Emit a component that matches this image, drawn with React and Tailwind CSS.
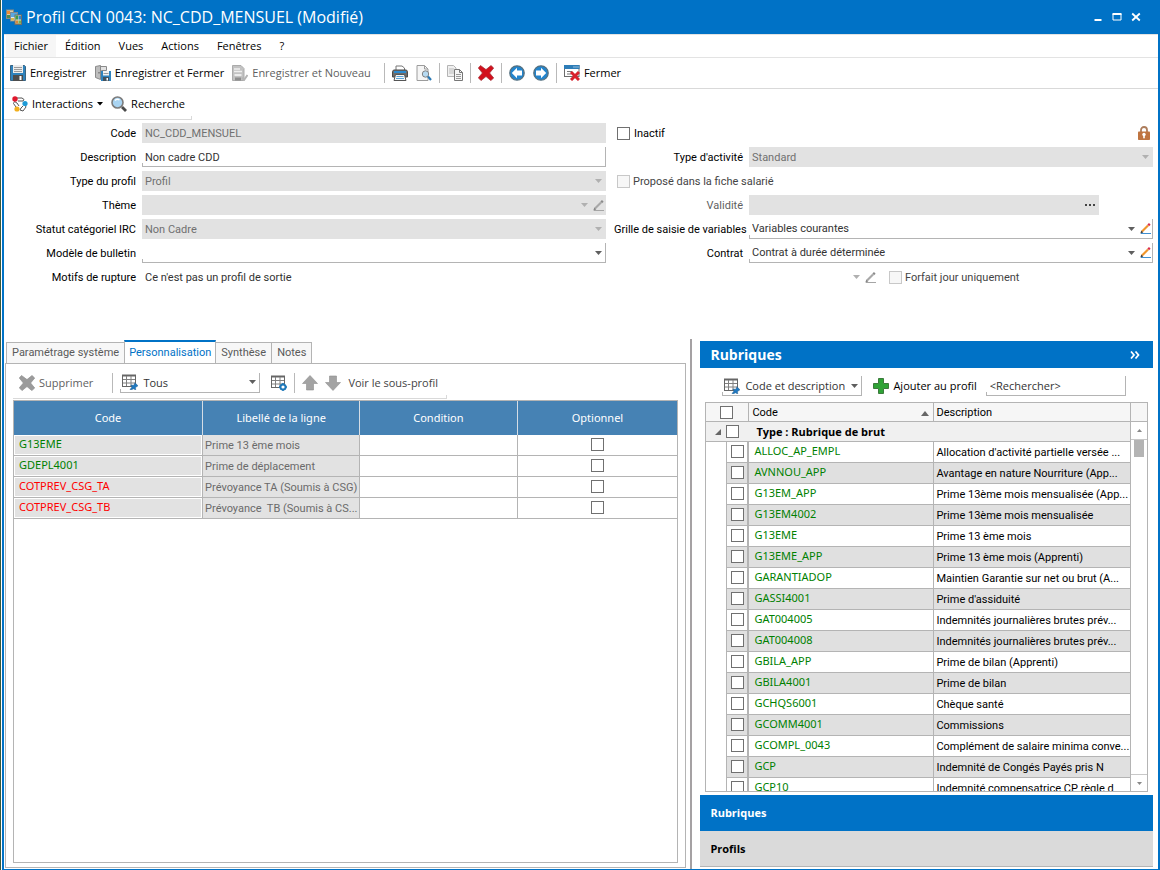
import React, { useState } from "react";

const TAHOMA = "font-['Roboto','Noto_Sans',sans-serif]";
const SEGOE = "font-['Open_Sans','Noto_Sans',sans-serif]";

/* ---------- icons ---------- */

function Svg({ children, className = "size-4" }) {
  return (
    <svg viewBox="0 0 16 16" className={`${className} shrink-0`} fill="none" aria-hidden="true">
      {children}
    </svg>
  );
}

function AppIcon() {
  return (
    <Svg>
      <path d="M0 0.500h8v9.500h-8z" fill="#8a8a80" />
      <path d="M1 1.500h6v7.500h-6z" fill="#d8cdb0" />
      <path d="M1 2h3v3h-3z" fill="#ee8c34" />
      <path d="M1 6h3v3h-3z" fill="#4f8a4f" />
      <path d="M4 3h8v9.500h-8z" fill="#7c8a94" />
      <path d="M5 4h6v7.500h-6z" fill="#dfe9f0" />
      <path d="M5 4h6v4h-6z" fill="#5aa7de" />
      <path d="M5 9h3v2.500h-3z" fill="#d9b84c" />
      <path d="M8.500 5.500h7.500v10.500h-7.500z" fill="#6f6f68" />
      <path d="M9.500 6.500h5.500v8h-5.500z" fill="#d8dcc8" />
      <path d="M9.500 6.500h2.500v4h-2.500z" fill="#3f9a48" />
      <path d="M12.500 7h2.500v3.500h-2.500z" fill="#2f86cc" />
      <path d="M9.500 11.500h2.500v3h-2.500z" fill="#d8893a" />
      <path d="M12.500 11.500h2.500v3h-2.500z" fill="#7fae4a" />
    </Svg>
  );
}

function SaveIcon() {
  return (
    <Svg>
      <path d="M0.500 0.500h14L15.500 1.500V15.500H0.500z" fill="#2f83bd" stroke="#3a6482" />
      <rect x="3" y="0" width="10" height="8" fill="#ececec" />
      <path d="M4 2.500h8M4 4.500h8M4 6.500h8" stroke="#9a9a9a" />
      <rect x="3" y="10" width="10" height="6" fill="#4d4d4d" />
      <rect x="9.500" y="11" width="2" height="4" fill="#fff" />
    </Svg>
  );
}

function SaveCloseIcon() {
  return (
    <Svg>
      <path d="M3.500 1.500h8v4h-5v7h-3z" fill="#e2e2e2" stroke="#8a8a8a" />
      <path d="M0.500 1.500L5.500 0.500v14L0.500 12.500z" fill="#bdbdbd" stroke="#8a8a8a" />
      <path d="M4 7v1.500" stroke="#555" />
      <rect x="6" y="6" width="10" height="10" fill="#2f83bd" />
      <rect x="8" y="6" width="6" height="4.500" fill="#f2f2f2" />
      <path d="M8.500 8.500h5" stroke="#999" />
      <rect x="8" y="12" width="6" height="4" fill="#43525e" />
      <rect x="11.500" y="13" width="1.500" height="2.500" fill="#fff" />
    </Svg>
  );
}

function SaveNewIcon() {
  return (
    <Svg>
      <path d="M0.500 0.500h8.500l3 3v12h-11.500z" fill="#c2c2c2" stroke="#ababab" />
      <path d="M2 4h6M2 6.500h8" stroke="#efefef" strokeWidth="1.500" />
      <rect x="2.500" y="9" width="7" height="2" fill="#ececec" />
      <rect x="3" y="12.500" width="6" height="3" fill="#8e8e8e" />
      <path d="M10 12.500l2 2.500 3.500-5" stroke="#b4b4b4" strokeWidth="2" />
    </Svg>
  );
}

function PrintIcon() {
  return (
    <Svg>
      <path d="M4 5V1h6l2.500 2V5" fill="#fff" stroke="#777" />
      <path d="M1.500 5h13l1 1.500V12h-15V6.500z" fill="#6b6b6b" stroke="#4a4a4a" />
      <path d="M2 7h12" stroke="#2a8ad0" strokeWidth="2" />
      <path d="M3.500 9.500h9l1.500 6h-12z" fill="#f6f6f6" stroke="#555" />
      <path d="M4.500 11.500h7M4 13.500h8" stroke="#5aa3d6" />
    </Svg>
  );
}

function PreviewIcon() {
  return (
    <Svg>
      <path d="M1 0.500h7.500l3.500 3.500v11.500h-11z" fill="#f5f5f5" stroke="#9c9c9c" />
      <path d="M8.500 0.500v3.500h3.500" stroke="#9c9c9c" />
      <circle cx="9.500" cy="9" r="3.200" fill="#b6daf2" stroke="#808080" />
      <path d="M12 11.500l3 3.500" stroke="#2878b4" strokeWidth="2.200" />
    </Svg>
  );
}

function CopyIcon() {
  return (
    <Svg>
      <path d="M0.500 0.500h6l2.500 2.500v8.500h-8.500z" fill="#f0f0f0" stroke="#b4b4b4" />
      <path d="M2 4h5M2 6h5M2 8h5" stroke="#bdbdbd" />
      <path d="M7.500 4.500h5l3 3v8h-8z" fill="#f6f6f6" stroke="#777" />
      <path d="M12.500 4.500v3h3" stroke="#777" />
      <path d="M9 9.500h5M9 11.500h5M9 13.500h5" stroke="#999" />
    </Svg>
  );
}

function CrossIcon({ fill = "#d2101c", stroke = "#a03038" }) {
  return (
    <Svg>
      <path
        d="M2.500 0.500L8 4.600 13 0.500 15.700 3 11.600 8 15.700 13 12.800 15.600 8 11.500 3 15.600 0.300 12.800 4.400 8 0.300 3z"
        fill={fill}
        stroke={stroke}
        strokeWidth="0.700"
      />
    </Svg>
  );
}

function CircleArrowIcon({ flip }) {
  return (
    <svg viewBox="0 0 16 16" className={flip ? "size-4 shrink-0 -scale-x-100" : "size-4 shrink-0"} fill="none" aria-hidden="true">
      <circle cx="8" cy="8" r="7.200" fill="#2384cc" stroke="#55707f" strokeWidth="1.300" />
      <path d="M2.800 8L8 2.800v2.700h5v5H8v2.700z" fill="#fff" />
    </svg>
  );
}

function CloseWindowIcon() {
  return (
    <Svg>
      <rect x="0.500" y="0.500" width="14.500" height="11" fill="#fff" stroke="#6c6c6c" />
      <rect x="0" y="0" width="15.500" height="4" fill="#2d7db8" />
      <path d="M9.500 2h1M11.500 2h1M13.500 2h1" stroke="#fff" />
      <path d="M3 6.500h5M3 9h4" stroke="#777" />
      <path d="M7 7l8 8M15 7l-8 8" stroke="#d8202c" strokeWidth="3" />
    </Svg>
  );
}

function InteractionsIcon() {
  return (
    <Svg>
      <path d="M5 2h5l2 1.500-1 1.500h-5M13 9l1 2-3 4-3-1 1-2 2-2M4 11L1.500 7.500l1-2 2.500 1.500 2 3" stroke="#555" fill="#fff" />
      <circle cx="3" cy="3" r="2.700" fill="#e0182d" />
      <circle cx="13" cy="7.500" r="2.600" fill="#1e9bd7" />
      <circle cx="5" cy="13" r="2.600" fill="#f2b01e" />
    </Svg>
  );
}

function SearchIcon() {
  return (
    <Svg>
      <circle cx="6.500" cy="6.500" r="5.500" fill="#a9d4f2" stroke="#7c7c7c" strokeWidth="1.600" />
      <path d="M4 4.500c1-1.200 3-1.500 4.500-0.500" stroke="#fff" strokeWidth="1.300" />
      <path d="M11 11l4 4" stroke="#4a4a4a" strokeWidth="2.800" />
    </Svg>
  );
}

function Pencil({ muted }) {
  return (
    <svg viewBox="0 0 11 11" className="size-[11px] shrink-0" fill="none" aria-hidden="true">
      <path d="M1 10.500h10" stroke={muted ? "#a5a5a5" : "#3f8fd0"} />
      <path d="M2 8.500L8 2.500" stroke={muted ? "#a8a8a8" : "#f0962c"} strokeWidth="2.200" />
      <path d="M8.200 2.400L9.800 0.900" stroke={muted ? "#8a8a8a" : "#d82c4a"} strokeWidth="2.400" />
      <path d="M0.300 10.500l1-3 2 2z" fill={muted ? "#888" : "#444"} />
    </svg>
  );
}

function LockIcon() {
  return (
    <svg viewBox="0 0 12 14" className="h-[14px] w-3" fill="none" role="img" aria-label="Verrouillé">
      <path d="M3 7V4a3 3 0 0 1 6 0v3" stroke="#ad7d5c" strokeWidth="1.800" />
      <rect x="0" y="5.500" width="12" height="8.500" rx="0.800" fill="#bf7440" />
      <circle cx="6" cy="8.500" r="1.700" fill="#fff" />
      <rect x="5.200" y="9" width="1.600" height="3.300" fill="#fff" />
    </svg>
  );
}

function GridIcon({ gear }) {
  return (
    <Svg>
      <rect x="0.500" y="1.500" width="13" height="11" fill="#fff" stroke="#666" />
      <path d="M0 1.500h14" stroke="#666" strokeWidth="2" />
      <path d="M4.500 2v10M9 2v10M1 5.500h12M1 9h12" stroke="#808080" />
      {gear ? (
        <>
          <circle cx="12" cy="12" r="2.600" fill="#fff" stroke="#1f78b8" strokeWidth="2" />
          <path d="M12 8v2M12 14v2M8 12h2M14 12h2" stroke="#1f78b8" strokeWidth="1.600" />
        </>
      ) : (
        <path d="M8 15.500l2-2.500-1.200-2 3 .3 1.200-2.500 3 3-2.500 1.700.2 2.500-2.200-1.200-2.500 1.200z" fill="#1f78c0" stroke="#2a618c" strokeWidth="0.500" />
      )}
    </Svg>
  );
}

function BlockArrow({ down }) {
  return (
    <svg viewBox="0 0 16 16" className={down ? "size-4 shrink-0 -scale-y-100" : "size-4 shrink-0"} aria-hidden="true">
      <path d="M8 0.500L15.500 8.500H11.500V15H4.500V8.500H0.500z" fill="#a3a3a3" stroke="#8f8f8f" strokeWidth="0.600" />
    </svg>
  );
}

function PlusIcon() {
  return (
    <Svg>
      <path d="M5.500 0.500h5v5h5v5h-5v5h-5v-5h-5v-5h5z" fill="#2fa336" stroke="#3c7a3c" />
    </Svg>
  );
}

function Caret({ muted }) {
  return (
    <svg viewBox="0 0 7 4" className="h-1 w-[7px] shrink-0" aria-hidden="true">
      <path d="M0 0h7L3.500 4z" fill={muted ? "#b0b0b0" : "#5f5f5f"} />
    </svg>
  );
}

/* ---------- shared controls ---------- */

function Check({ muted, ...props }) {
  return (
    <input
      type="checkbox"
      disabled={muted}
      className="block size-[13px] shrink-0 appearance-none border border-[#707070] bg-white checked:bg-[#0072c6] disabled:border-[#c8c8c8] disabled:bg-[#f7f7f7]"
      {...props}
    />
  );
}

function Separator() {
  return <span className="h-5 w-px bg-[#b9b9b9]" />;
}

function ToolButton({ icon, label, title, muted }) {
  return (
    <button
      type="button"
      aria-label={title}
      disabled={muted}
      className="flex items-center gap-1 whitespace-nowrap disabled:text-[#5f5f5f]"
    >
      {icon}
      {label}
    </button>
  );
}

function Frame({ muted, className = "", children }) {
  return (
    <div
      className={`flex h-5 min-w-0 items-center ${
        muted ? "bg-[#e2e2e2] text-[#707070]" : "border-r border-b border-[#b4b4b4] text-[#333]"
      } ${className}`}
    >
      {!muted && <span className="-mr-px h-[3px] w-px self-end bg-[#b4b4b4]" />}
      {children}
    </div>
  );
}

function Pick({ id, label, value, muted }) {
  return (
    <select
      id={id}
      aria-label={label}
      disabled={muted}
      className="h-full min-w-0 flex-1 appearance-none bg-transparent px-[3px] pt-px opacity-100 outline-none"
    >
      <option>{value}</option>
    </select>
  );
}

function Row({ id, label, muted, labelWidth, children }) {
  return (
    <div className="flex h-5 items-center gap-[6px]">
      <label htmlFor={id} className={`${labelWidth} shrink-0 pt-[2px] text-right whitespace-nowrap ${muted ? "text-[#5f5f5f]" : ""}`}>
        {label}
      </label>
      {children}
    </div>
  );
}

/* ---------- top of the window ---------- */

function TitleBar() {
  return (
    <header className={`flex h-[34px] shrink-0 items-center gap-1 bg-[#0072c6] pr-[19px] pl-1 text-white ${SEGOE}`}>
      <AppIcon />
      <h1 className="flex-1 text-base">Profil CCN 0043: NC_CDD_MENSUEL (Modifié)</h1>
      <div className="flex items-center gap-[9px]">
        <button type="button" aria-label="Réduire">
          <svg viewBox="0 0 10 10" className="size-[10px]"><path d="M1.500 7h7v2h-7z" fill="#fff" /></svg>
        </button>
        <button type="button" aria-label="Agrandir">
          <svg viewBox="0 0 10 10" className="size-[10px]" fill="none"><path d="M1 2h8v6h-8z" stroke="#fff" /><path d="M0.500 2h9" stroke="#fff" strokeWidth="2" /></svg>
        </button>
        <button type="button" aria-label="Fermer la fenêtre">
          <svg viewBox="0 0 10 10" className="size-[10px]"><path d="M1.200 1.500l7.600 7M8.800 1.500l-7.600 7" stroke="#fff" strokeWidth="1.800" /></svg>
        </button>
      </div>
    </header>
  );
}

function MenuBar() {
  return (
    <nav className={`flex h-6 shrink-0 items-center border-t border-b border-[#e3e3e3] pl-[2px] ${SEGOE}`}>
      <button type="button" className="h-full bg-[#f6f6f6] px-2">Fichier</button>
      {["Édition", "Vues", "Actions", "Fenêtres"].map((name) => (
        <button key={name} type="button" className="px-[9px]">{name}</button>
      ))}
      <button type="button" className="px-[9px]" aria-label="Aide">?</button>
    </nav>
  );
}

function Toolbars() {
  return (
    <div className={`shrink-0 ${SEGOE}`}>
      <div className="flex h-[31px] items-center gap-[7px] border-b border-[#d9d9d9] pl-[6px]">
        <div className="mr-[6px] flex gap-2">
          <ToolButton icon={<SaveIcon />} label="Enregistrer" />
          <ToolButton icon={<SaveCloseIcon />} label="Enregistrer et Fermer" />
          <ToolButton icon={<SaveNewIcon />} label="Enregistrer et Nouveau" muted />
        </div>
        <Separator />
        <div className="flex gap-2">
          <ToolButton icon={<PrintIcon />} title="Imprimer" />
          <ToolButton icon={<PreviewIcon />} title="Aperçu" />
        </div>
        <Separator />
        <ToolButton icon={<CopyIcon />} title="Dupliquer" />
        <Separator />
        <ToolButton icon={<CrossIcon />} title="Supprimer le profil" />
        <Separator />
        <div className="flex gap-2">
          <ToolButton icon={<CircleArrowIcon />} title="Précédent" />
          <ToolButton icon={<CircleArrowIcon flip />} title="Suivant" />
        </div>
        <Separator />
        <ToolButton icon={<CloseWindowIcon />} label="Fermer" />
      </div>
      <div className="flex">
        <div className="flex h-[31px] items-center gap-2 border-b border-[#d9d9d9] pr-[6px] pl-2">
          <button type="button" className="flex items-center gap-1">
            <InteractionsIcon />
            <span>Interactions</span>
            <svg viewBox="0 0 6 4" className="h-1 w-[6px]"><path d="M0 0h6L3 3.500z" fill="#000" /></svg>
          </button>
          <ToolButton icon={<SearchIcon />} label="Recherche" />
        </div>
        <span className="h-1 w-px self-end bg-[#d9d9d9]" />
      </div>
    </div>
  );
}

/* ---------- form ---------- */

function ProfileForm() {
  const left = "w-[132px]";
  const right = "w-[129px]";
  return (
    <form className="grid shrink-0 grid-cols-[602fr_539fr] gap-2 pt-[3px] pr-[5px] pb-[52px]">
      <div className="flex flex-col gap-1">
        <Row id="code" label="Code" labelWidth={left}>
          <Frame muted className="flex-1">
            <input id="code" disabled defaultValue="NC_CDD_MENSUEL" className="h-full min-w-0 flex-1 px-[3px] pt-px" />
          </Frame>
        </Row>
        <Row id="desc" label="Description" labelWidth={left}>
          <Frame className="flex-1">
            <input id="desc" defaultValue="Non cadre CDD" className="h-full min-w-0 flex-1 px-[3px] pt-px outline-none" />
          </Frame>
        </Row>
        <Row id="type" label="Type du profil" labelWidth={left}>
          <Frame muted className="flex-1 pr-1">
            <Pick id="type" value="Profil" muted />
            <Caret muted />
          </Frame>
        </Row>
        <Row id="theme" label="Thème" labelWidth={left}>
          <Frame muted className="flex-1 gap-[5px] pr-[2px]">
            <Pick id="theme" value="" muted />
            <Caret muted />
            <Pencil muted />
          </Frame>
        </Row>
        <Row id="statut" label="Statut catégoriel IRC" labelWidth={left}>
          <Frame muted className="flex-1 pr-1">
            <Pick id="statut" value="Non Cadre" muted />
            <Caret muted />
          </Frame>
        </Row>
        <Row id="modele" label="Modèle de bulletin" labelWidth={left}>
          <Frame className="flex-1 pr-[3px]">
            <Pick id="modele" value="" />
            <Caret />
          </Frame>
        </Row>
        <Row id="motifs" label="Motifs de rupture" labelWidth={left}>
          <output id="motifs" className="px-[3px] pt-[2px] text-[#333]">Ce n'est pas un profil de sortie</output>
        </Row>
      </div>
      <div className="flex flex-col gap-1">
        <div className="flex h-5 items-center gap-1 pr-[3px] pl-[3px]">
          <Check id="inactif" />
          <label htmlFor="inactif" className="flex-1 pt-[2px]">Inactif</label>
          <LockIcon />
        </div>
        <Row id="activite" label="Type d'activité" labelWidth={right}>
          <Frame muted className="flex-1 pr-1">
            <Pick id="activite" value="Standard" muted />
            <Caret muted />
          </Frame>
        </Row>
        <div className="flex h-5 items-center gap-[3px] pl-[3px]">
          <Check id="propose" muted />
          <label htmlFor="propose" className="pt-[2px] text-[#444]">Proposé dans la fiche salarié</label>
        </div>
        <Row id="validite" label="Validité" muted labelWidth={right}>
          <Frame muted className="mr-[54px] flex-1 pr-[3px]">
            <input id="validite" disabled className="min-w-0 flex-1" />
            <button type="button" aria-label="Choisir la validité">
              <svg viewBox="0 0 12 4" className="h-1 w-3"><path d="M1 1h2v2H1zM5 1h2v2H5zM9 1h2v2H9z" fill="#444" /></svg>
            </button>
          </Frame>
        </Row>
        <Row id="grille" label="Grille de saisie de variables" labelWidth={right}>
          <Frame className="flex-1 pr-px">
            <Pick id="grille" value="Variables courantes" />
            <div className="flex items-center gap-[5px]">
              <Caret />
              <Pencil />
            </div>
          </Frame>
        </Row>
        <Row id="contrat" label="Contrat" labelWidth={right}>
          <Frame className="flex-1 pr-px">
            <Pick id="contrat" value="Contrat à durée déterminée" />
            <div className="flex items-center gap-[5px]">
              <Caret />
              <Pencil />
            </div>
          </Frame>
        </Row>
        <div className="flex h-5 items-center gap-[5px] pl-[135px]">
          <span className="flex h-full w-[99px]"><Pick label="Motif" value="" muted /></span>
          <Caret muted />
          <Pencil muted />
          <div className="flex items-center gap-[3px] pl-2">
            <Check id="forfait" muted />
            <label htmlFor="forfait" className="pt-[2px] text-[#444]">Forfait jour uniquement</label>
          </div>
        </div>
      </div>
    </form>
  );
}

/* ---------- left panel ---------- */

const LINES = [
  { code: "G13EME", label: "Prime 13 ème mois" },
  { code: "GDEPL4001", label: "Prime de déplacement" },
  { code: "COTPREV_CSG_TA", label: "Prévoyance TA (Soumis à CSG)", alert: true },
  { code: "COTPREV_CSG_TB", label: "Prévoyance  TB (Soumis à CS...", alert: true },
];

function Tabs() {
  const [active, setActive] = useState("Personnalisation");
  return (
    <div role="tablist" className="-mb-px flex items-end pl-[2px]">
      {["Paramétrage système", "Personnalisation", "Synthèse", "Notes"].map((name) => (
        <button
          key={name}
          type="button"
          role="tab"
          aria-selected={active === name}
          onClick={() => setActive(name)}
          className={
            active === name
              ? "-ml-px h-6 border-x border-t-2 border-x-[#b4b4b4] border-t-[#0072c6] bg-white px-[4px] text-[#0072c6]"
              : "-ml-px h-[22px] border border-[#b4b4b4] bg-[#f7f7f7] px-[5px] text-[#5a5a5a]"
          }
        >
          {name}
        </button>
      ))}
    </div>
  );
}

function LinesPanel() {
  return (
    <section className="flex min-w-0 flex-[682] flex-col pt-px pb-px pl-px">
      <Tabs />
      <div className="flex min-h-0 flex-1 flex-col border border-[#b4b4b4] px-[7px] pt-[6px] pb-1">
        <div className="flex">
          <div className={`flex h-[29px] items-center gap-[7px] border-b border-[#d9d9d9] pr-2 pb-[3px] pl-[6px] ${SEGOE}`}>
            <ToolButton icon={<CrossIcon fill="#9b9b9b" stroke="#8f8f8f" />} label="Supprimer" muted />
            <span className="ml-3 h-5 w-px bg-[#b9b9b9]" />
            <Frame className="mr-1 w-[140px] gap-[2px] pr-[3px]">
              <GridIcon />
              <Pick label="Filtre des lignes" value="Tous" />
              <Caret />
            </Frame>
            <ToolButton icon={<GridIcon gear />} title="Paramétrer la grille" />
            <Separator />
            <ToolButton icon={<BlockArrow />} title="Monter" muted />
            <ToolButton icon={<BlockArrow down />} title="Descendre" muted />
            <button type="button" disabled className="text-[#444]">Voir le sous-profil</button>
          </div>
          <span className="h-1 w-px self-end bg-[#d9d9d9]" />
        </div>
        <div className="mt-px min-h-0 flex-1 overflow-hidden border border-[#b4b4b4]">
          <table className="w-full table-fixed border-separate border-spacing-0 font-['Noto_Sans',sans-serif]">
            <colgroup>
              <col className="w-[28.5%]" />
              <col className="w-[23.7%]" />
              <col className="w-[23.7%]" />
              <col />
            </colgroup>
            <thead>
              <tr className="h-[34px] bg-[#4682b4] text-white">
                {["Code", "Libellé de la ligne", "Condition", "Optionnel"].map((name, i) => (
                  <th key={name} scope="col" className={i < 3 ? "border-r border-[#d5dde5] p-0 pb-px font-normal" : "p-0 pb-px font-normal"}>
                    {name}
                  </th>
                ))}
              </tr>
            </thead>
            <tbody>
              {LINES.map((line) => (
                <tr key={line.code} className="h-[21px]">
                  <td className={`border-r border-b border-[#b4b4b4] bg-[#e2e2e2] p-0 pb-[2px] pl-[5px] inset-ring inset-ring-white ${line.alert ? "text-[#ff0000]" : "text-[#008000]"}`}>
                    {line.code}
                  </td>
                  <td className={`overflow-hidden border-r border-b border-[#b4b4b4] bg-[#e2e2e2] p-0 pt-[2px] pl-[2px] whitespace-pre text-[#6a6a6a] ${TAHOMA}`}>
                    {line.label}
                  </td>
                  <td className="border-r border-b border-[#b4b4b4] p-0" />
                  <td className="border-b border-[#b4b4b4] p-0">
                    <div className="flex justify-center pb-px"><Check aria-label={`${line.code} optionnel`} /></div>
                  </td>
                </tr>
              ))}
            </tbody>
          </table>
        </div>
      </div>
    </section>
  );
}

/* ---------- right panel ---------- */

const ITEMS = [
  ["ALLOC_AP_EMPL", "Allocation d'activité partielle versée ..."],
  ["AVNNOU_APP", "Avantage en nature Nourriture (App..."],
  ["G13EM_APP", "Prime 13ème mois mensualisée (App..."],
  ["G13EM4002", "Prime 13ème mois mensualisée"],
  ["G13EME", "Prime 13 ème mois"],
  ["G13EME_APP", "Prime 13 ème mois (Apprenti)"],
  ["GARANTIADOP", "Maintien Garantie sur net ou brut (A..."],
  ["GASSI4001", "Prime d'assiduité"],
  ["GAT004005", "Indemnités journalières brutes prév..."],
  ["GAT004008", "Indemnités journalières brutes prév..."],
  ["GBILA_APP", "Prime de bilan (Apprenti)"],
  ["GBILA4001", "Prime de bilan"],
  ["GCHQS6001", "Chèque santé"],
  ["GCOMM4001", "Commissions"],
  ["GCOMPL_0043", "Complément de salaire minima conve..."],
  ["GCP", "Indemnité de Congés Payés pris N"],
  ["GCP10", "Indemnité compensatrice CP règle d"],
];

function ItemsTable() {
  return (
    <div className="flex min-h-0 flex-1 border border-[#b4b4b4]">
      <div className="min-w-0 flex-1 overflow-hidden">
        <table className="w-full table-fixed border-separate border-spacing-0">
          <colgroup>
            <col className="w-[21px]" />
            <col className="w-[22px]" />
            <col className="w-[185px]" />
            <col />
          </colgroup>
          <thead>
            <tr className="h-[19px] bg-[#f6f6f6]">
              <th colSpan={2} className="border-r border-b border-[#b4b4b4] p-0">
                <div className="flex justify-center pr-px"><Check aria-label="Tout sélectionner" /></div>
              </th>
              <th scope="col" className="border-r border-b border-[#b4b4b4] p-0 pt-[2px] font-normal">
                <div className="flex items-center justify-between pr-1 pl-[3px]">
                  Code
                  <svg viewBox="0 0 8 5" className="h-[5px] w-2"><path d="M0 5h8L4 0z" fill="#666" /></svg>
                </div>
              </th>
              <th scope="col" className="border-b border-[#b4b4b4] p-0 pt-[2px] pl-[2px] text-left font-normal">Description</th>
            </tr>
          </thead>
          <tbody>
            <tr className="h-5 bg-[#f0f0f0]">
              <td colSpan={4} className="border-b border-[#b4b4b4] p-0">
                <div className="flex items-center">
                  <svg viewBox="0 0 6 6" className="mr-[5px] ml-[9px] size-[6px]"><path d="M6 0v6H0z" fill="#666" /></svg>
                  <Check id="group" />
                  <label htmlFor="group" className={`pl-[17px] font-bold ${SEGOE}`}>Type : Rubrique de brut</label>
                </div>
              </td>
            </tr>
            {ITEMS.map(([code, text], i) => (
              <tr key={code} className={i % 2 ? "h-[21px] bg-[#e0e0e0]" : "h-[21px] bg-white"}>
                <td className="border-r border-[#b4b4b4] bg-white p-0" />
                <td className="border-r-2 border-b border-[#b4b4b4] p-0 pb-px pl-1"><Check aria-label={code} /></td>
                <td className="border-r border-b border-[#b4b4b4] p-0 pb-[2px] pl-[5px] font-['Noto_Sans',sans-serif] text-[#008000]">{code}</td>
                <td className="overflow-hidden border-b border-[#b4b4b4] p-0 pt-[2px] pl-[2px] whitespace-nowrap">{text}</td>
              </tr>
            ))}
          </tbody>
        </table>
      </div>
      <div className="flex w-[17px] shrink-0 flex-col border-l border-[#b4b4b4]">
        <div className="h-[19px] border-b border-[#b4b4b4] bg-[#f6f6f6]" />
        <button type="button" aria-label="Défiler vers le haut" className="flex h-[18px] items-center justify-center border-b border-[#c8c8c8]">
          <svg viewBox="0 0 5 3" className="h-[3px] w-[5px]"><path d="M0 3h5L2.500 0z" fill="#888" /></svg>
        </button>
        <div className="mx-[3px] h-[17px] bg-[#b4b4b4]" />
        <div className="flex-1" />
        <button type="button" aria-label="Défiler vers le bas" className="flex h-[17px] items-center justify-center border-t border-[#c8c8c8]">
          <svg viewBox="0 0 5 3" className="h-[3px] w-[5px]"><path d="M0 0h5L2.500 3z" fill="#888" /></svg>
        </button>
      </div>
    </div>
  );
}

function ItemsPanel() {
  return (
    <aside className="mt-[2px] flex min-w-0 flex-[453] flex-col">
      <div className={`flex h-[27px] shrink-0 items-center justify-between bg-[#0072c6] pr-[13px] pl-[10px] text-white ${SEGOE}`}>
        <h2 className="text-sm font-bold">Rubriques</h2>
        <button type="button" aria-label="Replier le panneau">
          <svg viewBox="0 0 10 8" className="h-2 w-[10px]" fill="none"><path d="M1 0.500l3 3.500-3 3.500M5.500 0.500l3 3.500-3 3.500" stroke="#fff" strokeWidth="1.700" /></svg>
        </button>
      </div>
      <div className="flex min-h-0 flex-1 flex-col pt-2 pr-[5px] pb-[3px] pl-[5px]">
        <div className={`mb-[6px] flex h-5 shrink-0 items-center pl-[17px] ${SEGOE}`}>
          <Frame className="w-[140px] gap-[2px] pr-[3px]">
            <GridIcon />
            <Pick label="Affichage" value="Code et description" />
            <Caret />
          </Frame>
          <span className="w-[11px]" />
          <ToolButton icon={<PlusIcon />} label="Ajouter au profil" />
          <span className="w-[9px]" />
          <Frame className="w-[140px]">
            <input aria-label="Rechercher" placeholder="<Rechercher>" className="w-full min-w-0 px-1 outline-none placeholder:text-[#333]" />
          </Frame>
        </div>
        <ItemsTable />
      </div>
      <button type="button" className={`h-9 shrink-0 bg-[#0072c6] pl-[10px] text-left font-bold text-white ${SEGOE}`}>Rubriques</button>
      <button type="button" className={`h-9 shrink-0 border-b border-[#b4b4b4] bg-[#dadada] pl-[10px] text-left font-bold ${SEGOE}`}>Profils</button>
      <div className="h-[2px] shrink-0" />
    </aside>
  );
}

export default function App() {
  return (
    <div className={`flex h-screen bg-white text-[11px] leading-[14px] text-black ${TAHOMA}`}>
      <div className="w-px shrink-0 bg-[#3c5a3c]" />
      <div className="w-px shrink-0 bg-white" />
      <div className="flex min-w-0 flex-1 flex-col border-b border-[#0072c6] bg-[#0072c6]">
        <TitleBar />
        <div className="mr-[2px] ml-[2px] flex min-h-0 flex-1 flex-col bg-white">
          <MenuBar />
          <Toolbars />
          <ProfileForm />
          <main className="flex min-h-0 flex-1 pr-[5px]">
            <LinesPanel />
            <div className="mr-2 ml-[4px] w-[2px] shrink-0 bg-[#a5a1a3]" />
            <ItemsPanel />
          </main>
        </div>
      </div>
    </div>
  );
}
